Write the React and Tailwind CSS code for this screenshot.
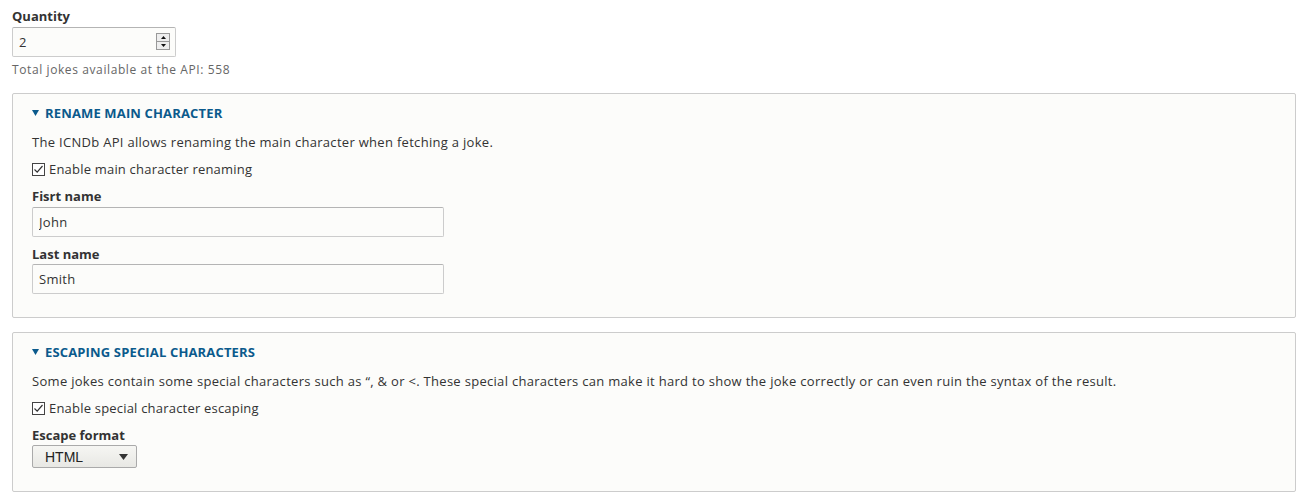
import React from "react";

const Checkbox = () => (
  <span className="inline-flex items-center justify-center w-[13px] h-[13px] border border-[#444] bg-white mr-[4px] shrink-0">
    <svg width="11" height="11" viewBox="0 0 11 11">
      <path d="M1.5 5.5 L4.2 8.2 L9.5 2" fill="none" stroke="#333" strokeWidth="1.2" />
    </svg>
  </span>
);

const TextInput = ({ value, width }) => (
  <input
    type="text"
    readOnly
    value={value}
    className={`${width} h-[30px] px-[6px] border border-[#ccc] border-t-[#b4b4b4] rounded-[2px] bg-[#fcfcfa] text-[13px] tracking-[0.3px] text-[#333] outline-none`}
  />
);

const Legend = ({ children }) => (
  <div className="flex items-center h-[16px] text-[13px] tracking-[0.15px] font-bold uppercase text-[#0b5a8c] leading-[16px]">
    <svg width="7" height="6" viewBox="0 0 7 6" className="mr-[6px]">
      <path d="M0 0 L7 0 L3.5 6 Z" fill="#0b5a8c" />
    </svg>
    {children}
  </div>
);

const App = () => {
  return (
    <div className="pl-3 pr-[15px] pt-[7px] pb-[5px] bg-white text-[#333] font-['Open_Sans',sans-serif] text-[13px] leading-[18px]">
      <label className="block font-bold">Quantity</label>
      <div className="relative mt-[2px] w-[164px]">
        <TextInput value="2" width="w-[164px]" />
        <div className="absolute right-[6px] top-[6px] w-[14px] h-[17px] border border-[#999] bg-[#eee] flex flex-col">
          <div className="flex-1 flex items-center justify-center border-b border-[#999]">
            <svg width="5" height="3" viewBox="0 0 5 3"><path d="M0 3 L5 3 L2.5 0 Z" fill="#111" /></svg>
          </div>
          <div className="flex-1 flex items-center justify-center">
            <svg width="5" height="3" viewBox="0 0 5 3"><path d="M0 0 L5 0 L2.5 3 Z" fill="#111" /></svg>
          </div>
        </div>
      </div>
      <p className="mt-[5px] text-[12px] tracking-[0.6px] leading-[16px] text-[#666]">Total jokes available at the API: 558</p>

      <fieldset className="mt-[15px] border border-[#ccc] rounded-[2px] bg-[#fcfcfa] pl-[19px] pt-[11px] pb-[23px]">
        <Legend>Rename main character</Legend>
        <p className="mt-[12px] tracking-[0.3px]">The ICNDb API allows renaming the main character when fetching a joke.</p>
        <div className="mt-[9px] flex items-center tracking-[0.2px]">
          <Checkbox />
          <span>Enable main character renaming</span>
        </div>
        <label className="block mt-[9px] font-bold">Fisrt name</label>
        <div className="mt-[2px]">
          <TextInput value="John" width="w-[412px]" />
        </div>
        <label className="block mt-[8px] font-bold">Last name</label>
        <div className="mt-[1px]">
          <TextInput value="Smith" width="w-[412px]" />
        </div>
      </fieldset>

      <fieldset className="mt-[14px] border border-[#ccc] rounded-[2px] bg-[#fcfcfa] pl-[19px] pt-[11px] pb-[23px]">
        <Legend>Escaping special characters</Legend>
        <p className="mt-[12px] tracking-[0.3px]">
          Some jokes contain some special characters such as “, &amp; or &lt;. These special characters can make it hard to show the joke correctly or can even ruin the syntax of the result.
        </p>
        <div className="mt-[9px] flex items-center tracking-[0.2px]">
          <Checkbox />
          <span>Enable special character escaping</span>
        </div>
        <label className="block mt-[9px] font-bold">Escape format</label>
        <div className="mt-[1px] w-[105px] h-[23px] border border-[#aaa] rounded-[2px] bg-gradient-to-b from-[#f6f6f3] to-[#e8e8e4] flex items-center justify-between pl-[12px] pr-[8px] font-['Liberation_Sans',sans-serif] text-[14px] text-[#222]">
          <span>HTML</span>
          <svg width="9" height="6" viewBox="0 0 9 6"><path d="M0 0 L9 0 L4.5 6 Z" fill="#333" /></svg>
        </div>
      </fieldset>
    </div>
  );
};

export default App;
